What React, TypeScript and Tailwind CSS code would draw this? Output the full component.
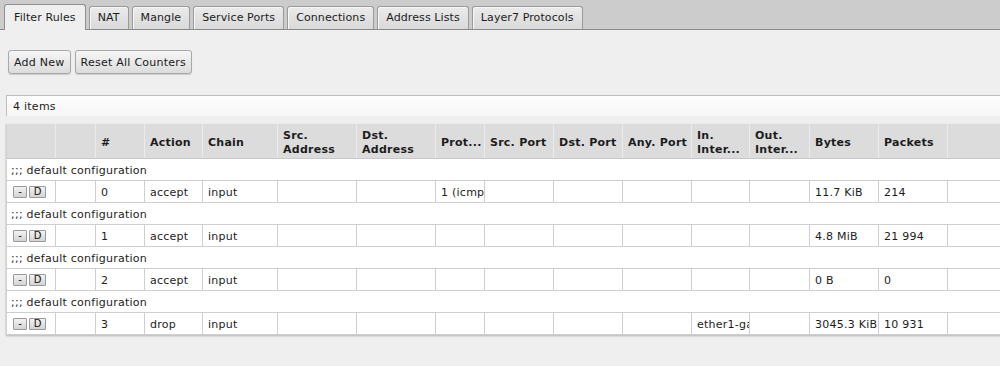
import React from 'react';

const tabs = ['Filter Rules', 'NAT', 'Mangle', 'Service Ports', 'Connections', 'Address Lists', 'Layer7 Protocols'];

// column widths include the right border, taken from the separators in the picture
const cols: { label: string[]; w: string }[] = [
  { label: [''], w: 'w-[49px]' },
  { label: [''], w: 'w-[40px]' },
  { label: ['#'], w: 'w-[49px]' },
  { label: ['Action'], w: 'w-[58px]' },
  { label: ['Chain'], w: 'w-[75px]' },
  { label: ['Src.', 'Address'], w: 'w-[79px]' },
  { label: ['Dst.', 'Address'], w: 'w-[79px]' },
  { label: ['Prot...'], w: 'w-[49px]' },
  { label: ['Src. Port'], w: 'w-[69px]' },
  { label: ['Dst. Port'], w: 'w-[69px]' },
  { label: ['Any. Port'], w: 'w-[69px]' },
  { label: ['In.', 'Inter...'], w: 'w-[58px]' },
  { label: ['Out.', 'Inter...'], w: 'w-[60px]' },
  { label: ['Bytes'], w: 'w-[69px]' },
  { label: ['Packets'], w: 'w-[69px]' },
  { label: [''], w: 'w-[80px]' },
];

const rules = [
  { id: '0', action: 'accept', chain: 'input', proto: '1 (icmp)', inIf: '', bytes: '11.7 KiB', packets: '214' },
  { id: '1', action: 'accept', chain: 'input', proto: '', inIf: '', bytes: '4.8 MiB', packets: '21 994' },
  { id: '2', action: 'accept', chain: 'input', proto: '', inIf: '', bytes: '0 B', packets: '0' },
  { id: '3', action: 'drop', chain: 'input', proto: '', inIf: 'ether1-gateway', bytes: '3045.3 KiB', packets: '10 931' },
];

function SmallButton({ children, w }: { children: React.ReactNode; w: string }) {
  return (
    <span
      className={`${w} flex h-[12px] items-center justify-center rounded-[1px] border border-[#9a9a9a] bg-gradient-to-b from-[#f2f2f2] to-[#d4d4d4] text-[10px] leading-none tracking-normal text-[#111]`}
    >
      {children}
    </span>
  );
}

function Button({ children }: { children: React.ReactNode }) {
  return (
    <button className="h-[24px] rounded-[3px] border border-[#a8a8a8] bg-gradient-to-b from-[#f6f6f6] to-[#dcdcdc] px-[5px] pt-[2px] text-[#1a1a1a] shadow-[0_1px_1px_rgba(0,0,0,0.15)]">
      {children}
    </button>
  );
}

export default function App() {
  return (
    <div className="h-[366px] w-[1000px] overflow-hidden bg-[#efefef] font-['DejaVu_Sans',sans-serif] text-[11px] tracking-[0.25px] text-[#1c1c1c]">
      {/* tab strip */}
      <div className="flex h-[30px] items-end gap-[3px] border-b border-[#8a8a8a] bg-[#cccccc] pl-[4px] tracking-[0.1px]">
        {tabs.map((t, i) =>
          i === 0 ? (
            <div
              key={t}
              className="-mb-px flex h-[26px] items-center rounded-t-[3px] border border-b-0 border-[#8f8f8f] bg-[#efefef] px-[9px] pt-[2px]"
            >
              {t}
            </div>
          ) : (
            <div
              key={t}
              className="flex h-[23px] items-center rounded-t-[3px] border border-b-0 border-[#9a9a9a] bg-gradient-to-b from-[#ebebeb] to-[#d9d9d9] px-[8px] pt-[1px] shadow-[inset_1px_1px_0_#f8f8f8]"
            >
              {t}
            </div>
          )
        )}
      </div>

      {/* toolbar */}
      <div className="mt-[20px] flex gap-[4px] pl-[8px]">
        <Button>Add New</Button>
        <Button>Reset All Counters</Button>
      </div>

      {/* item count */}
      <div className="ml-[6px] mt-[21px] flex h-[21px] items-center border-l border-t border-[#bdbdbd] bg-gradient-to-b from-[#fdfdfd] to-[#f7f7f7] pl-[6px] pt-[3px]">
        4 items
      </div>

      {/* rules table */}
      <div className="ml-[6px] mt-[8px] w-[1060px] border-l border-[#cfcfcf] bg-white shadow-[0_1px_2px_rgba(0,0,0,0.25)]">
        <div className="flex h-[35px] border-b border-[#c8c8c8] bg-[#dcdcdc] font-bold">
          {cols.map((c, i) => (
            <div
              key={i}
              className={`${c.w} flex shrink-0 flex-col justify-center border-r border-[#ececec] pl-[5px] pt-[3px] leading-[14px]`}
            >
              {c.label.map((l, j) => (
                <span key={j} className="whitespace-nowrap">
                  {l}
                </span>
              ))}
            </div>
          ))}
        </div>

        {rules.map((r) => {
          const cells = ['', '', r.id, r.action, r.chain, '', '', r.proto, '', '', '', r.inIf, '', r.bytes, r.packets, ''];
          return (
            <React.Fragment key={r.id}>
              <div className="flex h-[22px] items-center border-b border-[#cfcfcf] pl-[4px] pt-[3px]">;;; default configuration</div>
              <div className="flex h-[22px] border-b border-[#cfcfcf]">
                {cols.map((c, i) => (
                  <div
                    key={i}
                    className={`${c.w} flex shrink-0 items-center overflow-hidden whitespace-nowrap ${
                      i === cols.length - 1 ? '' : 'border-r border-[#cfcfcf]'
                    } ${i === 0 ? 'gap-[2px] pl-[6px] pt-[1px]' : 'pl-[5px] pt-[3px]'}`}
                  >
                    {i === 0 ? (
                      <>
                        <SmallButton w="w-[14px]">-</SmallButton>
                        <SmallButton w="w-[17px]">D</SmallButton>
                      </>
                    ) : (
                      cells[i]
                    )}
                  </div>
                ))}
              </div>
            </React.Fragment>
          );
        })}
      </div>
    </div>
  );
}
